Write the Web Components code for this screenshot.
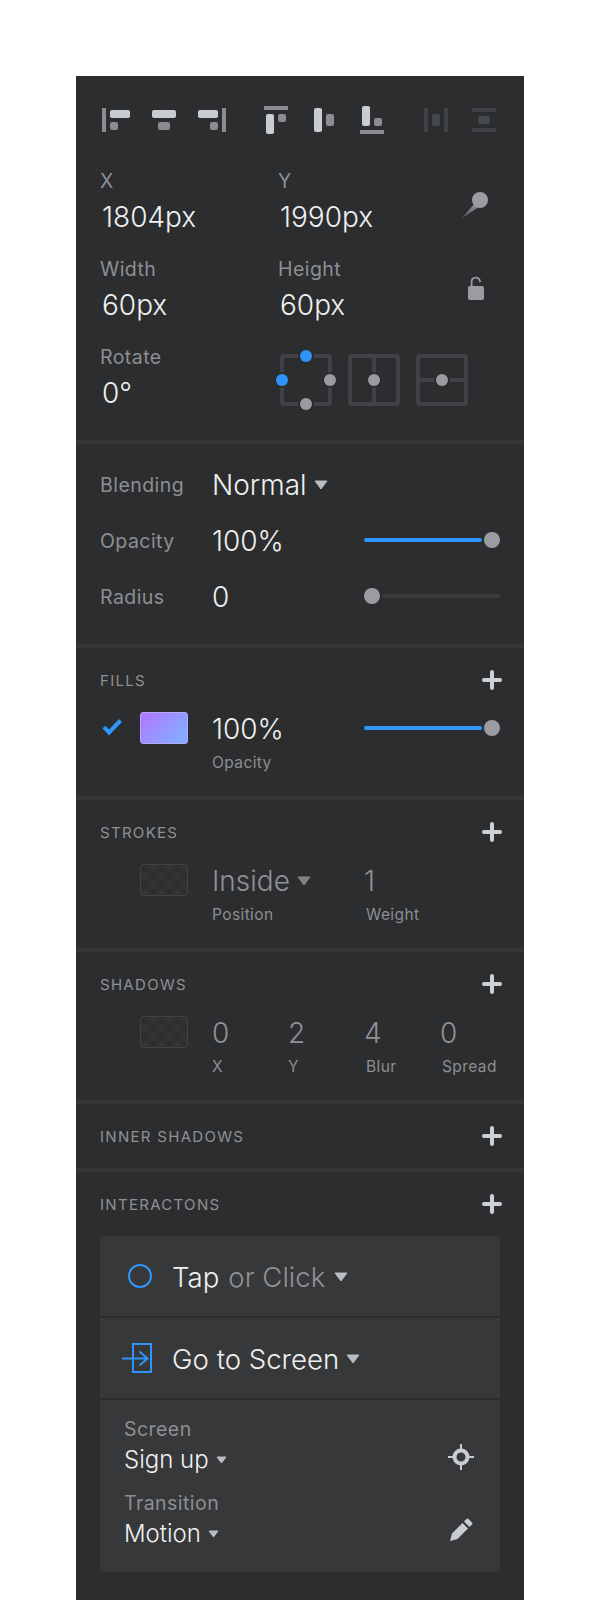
<!DOCTYPE html>
<html>
<head>
<meta charset="utf-8">
<title>Inspector</title>
<style>
html, body { margin: 0; padding: 0; background: #fff; }
body { height: 1600px; overflow: hidden; font-family: "Inter", "Liberation Sans", sans-serif; }
</style>
</head>
<body>
<inspector-panel>
  <panel-section>
    <align-bar></align-bar>
    <geometry-grid>
      <value-field label="X">1804px</value-field>
      <value-field label="Y">1990px</value-field>
      <svg-icon name="pin"></svg-icon>
      <value-field label="Width">60px</value-field>
      <value-field label="Height">60px</value-field>
      <svg-icon name="lock"></svg-icon>
      <value-field label="Rotate">0°</value-field>
      <anchor-group></anchor-group>
    </geometry-grid>
  </panel-section>

  <panel-section>
    <prop-row label="Blending"><drop-value>Normal</drop-value></prop-row>
    <prop-row label="Opacity">100%<range-slider slot="end" value="full"></range-slider></prop-row>
    <prop-row label="Radius">0<range-slider slot="end" value="empty"></range-slider></prop-row>
  </panel-section>

  <panel-section heading="Fills">
    <paint-row cols="152px 136px">
      <svg-icon slot="check" name="check"></svg-icon>
      <paint-swatch slot="swatch" kind="gradient"></paint-swatch>
      <value-stack label="Opacity">100%</value-stack>
      <range-slider value="full"></range-slider>
    </paint-row>
  </panel-section>

  <panel-section heading="Strokes">
    <paint-row cols="152px 76px" dim>
      <paint-swatch slot="swatch"></paint-swatch>
      <value-stack label="Position" dim><drop-value dim>Inside</drop-value></value-stack>
      <value-stack label="Weight" dim nudge>1</value-stack>
    </paint-row>
  </panel-section>

  <panel-section heading="Shadows">
    <paint-row cols="76px 76px 76px 76px" dim>
      <paint-swatch slot="swatch"></paint-swatch>
      <value-stack label="X" dim>0</value-stack>
      <value-stack label="Y" dim>2</value-stack>
      <value-stack label="Blur" dim nudge>4</value-stack>
      <value-stack label="Spread" dim nudge>0</value-stack>
    </paint-row>
  </panel-section>

  <panel-section heading="Inner Shadows"></panel-section>

  <panel-section heading="Interactons" last>
    <interaction-card>
      <action-row>
        <svg-icon slot="icon" name="circle"></svg-icon>
        <span>Tap</span><dim-text>or Click</dim-text><drop-value></drop-value>
      </action-row>
      <action-row>
        <svg-icon slot="icon" name="enter"></svg-icon>
        <drop-value>Go to Screen</drop-value>
      </action-row>
      <detail-block>
        <detail-row label="Screen" value="Sign up"><svg-icon name="target"></svg-icon></detail-row>
        <detail-row label="Transition" value="Motion"><svg-icon name="pencil"></svg-icon></detail-row>
      </detail-block>
    </interaction-card>
  </panel-section>
</inspector-panel>

<script>
const icons = {
  pin: `<svg width="32" height="36" viewBox="0 0 32 36"><defs><linearGradient id="t" x1="0" y1="1" x2="1" y2="0"><stop offset="0" stop-color="#55575a"/><stop offset="1" stop-color="#8f9195"/></linearGradient></defs><path d="M6 32 L18 18 L22 21.5 Z" fill="url(#t)"/><circle cx="24" cy="14" r="8" fill="#9a9ca1"/></svg>`,
  lock: `<svg width="28" height="28" viewBox="0 0 28 28"><path d="M15.6 12 V7.6 A4.2 4.2 0 0 1 23.8 6.6 L24.6 8" fill="none" stroke="#9a9ca1" stroke-width="1.8"/><rect x="12" y="12" width="16" height="14" rx="2" fill="#9a9ca1"/></svg>`,
  check: `<svg width="24" height="20" viewBox="0 0 24 20"><path d="M4 9 L9 14.5 L20.5 2.5" fill="none" stroke="#2e96fb" stroke-width="4"/></svg>`,
  circle: `<svg width="32" height="32" viewBox="0 0 32 32"><circle cx="20" cy="16" r="11" fill="none" stroke="#2e96fb" stroke-width="2"/></svg>`,
  enter: `<svg width="32" height="32" viewBox="0 0 32 32"><rect x="13" y="2" width="18" height="28" fill="none" stroke="#2e96fb" stroke-width="2"/><path d="M2 16.5 H27 M19.5 9.5 L27.5 16.5 L19.5 23.5" fill="none" stroke="#2e96fb" stroke-width="2"/></svg>`,
  target: `<svg width="28" height="28" viewBox="0 0 28 28"><circle cx="14" cy="14" r="6.5" fill="none" stroke="#c9ccd0" stroke-width="4"/><path d="M14 1 V6 M14 22 V27 M1 14 H6 M22 14 H27" stroke="#c9ccd0" stroke-width="2"/></svg>`,
  pencil: `<svg width="28" height="28" viewBox="0 0 28 28"><path d="M3 24 L5 16.5 L15.5 6 L21 11.5 L10.5 22 Z" fill="#c9ccd0"/><path d="M17 4.5 L19.5 2 Q20.5 1 21.5 2 L25 5.5 Q26 6.5 25 7.5 L22.5 10 Z" fill="#c9ccd0"/></svg>`
}

class SvgIcon extends HTMLElement {
  constructor() {
    super()
    this.attachShadow({ mode: 'open' })
  }
  connectedCallback() {
    this.shadowRoot.innerHTML = `<style>
      :host { display: inline-flex; }
      svg { display: block; }
    </style>${icons[this.getAttribute('name')]}`
  }
}

const panelTemplate = document.createElement('template')
panelTemplate.innerHTML = `<style>
  :host {
    display: block;
    box-sizing: border-box;
    width: 448px;
    height: 1524px;
    margin: 76px 0 0 76px;
    background: #2c2d2f;
    overflow: hidden;
    color: #eef0f2;
    font-family: "Inter", "Liberation Sans", sans-serif;
  }
</style><slot></slot>`

class InspectorPanel extends HTMLElement {
  constructor() {
    super()
    this.attachShadow({ mode: 'open' })
    this.shadowRoot.appendChild(panelTemplate.content.cloneNode(true))
  }
}

class PanelSection extends HTMLElement {
  constructor() {
    super()
    this.attachShadow({ mode: 'open' })
  }
  connectedCallback() {
    const heading = this.getAttribute('heading')
    this.shadowRoot.innerHTML = `<style>
      :host {
        display: block;
        padding: ${heading ? '20px' : '0'} 24px 0;
        border-bottom: 4px solid #353638;
      }
      :host([last]) { border-bottom: 0; }
      header {
        display: flex;
        justify-content: space-between;
        align-items: center;
        height: 24px;
        margin-bottom: 20px;
        font-size: 15px;
        letter-spacing: 1.3px;
        text-transform: uppercase;
        color: #8f9195;
      }
      svg { display: block; margin-right: -2px; }
    </style>
    ${heading ? `<header><span>${heading}</span><svg width="20" height="20" viewBox="0 0 20 20"><path d="M10 2 V18 M2 10 H18" stroke="#cdd0d4" stroke-width="4" stroke-linecap="round"/></svg></header>` : ''}
    <slot></slot>`
  }
}

const alignTemplate = document.createElement('template')
alignTemplate.innerHTML = `<style>
  :host { display: flex; height: 28px; padding: 30px 0 35px 2px; --l: #c9ccd0; --g: #8a8c90; --b: #404245; --m: #46494c; }
  svg { display: block; flex: none; }
  .light { fill: var(--l); }
  .gray { fill: var(--g); }
  .off { fill: var(--b); }
  .mid { fill: var(--m); }
</style>
<svg width="28" height="28"><rect class="gray" x="0" y="2" width="4" height="24"/><rect class="light" x="8" y="4" width="20" height="8" rx="2"/><rect class="gray" x="8" y="16" width="8" height="8" rx="2"/></svg>
<svg width="24" height="28" style="margin-left:22px"><rect class="light" x="0" y="4" width="24" height="8" rx="2"/><rect class="gray" x="6" y="16" width="12" height="8" rx="2"/></svg>
<svg width="28" height="28" style="margin-left:22px"><rect class="light" x="0" y="4" width="20" height="8" rx="2"/><rect class="gray" x="12" y="16" width="8" height="8" rx="2"/><rect class="gray" x="24" y="2" width="4" height="24"/></svg>
<svg width="24" height="28" style="margin-left:38px"><rect class="gray" x="0" y="0" width="24" height="4"/><rect class="light" x="2" y="8" width="8" height="20" rx="2"/><rect class="gray" x="14" y="8" width="8" height="8" rx="2"/></svg>
<svg width="20" height="28" style="margin-left:26px"><rect class="light" x="0" y="2" width="8" height="24" rx="2"/><rect class="gray" x="12" y="8" width="8" height="12" rx="2"/></svg>
<svg width="24" height="28" style="margin-left:26px"><rect class="light" x="2" y="0" width="8" height="20" rx="2"/><rect class="gray" x="14" y="12" width="8" height="8" rx="2"/><rect class="gray" x="0" y="24" width="24" height="4"/></svg>
<svg width="24" height="28" style="margin-left:40px"><rect class="off" x="0" y="2" width="4" height="24"/><rect class="off" x="20" y="2" width="4" height="24"/><rect class="mid" x="8" y="8" width="8" height="12" rx="2"/></svg>
<svg width="24" height="28" style="margin-left:24px"><rect class="off" x="0" y="2" width="24" height="4"/><rect class="off" x="0" y="22" width="24" height="4"/><rect class="mid" x="6" y="10" width="12" height="8" rx="2"/></svg>`

class AlignBar extends HTMLElement {
  constructor() {
    super()
    this.attachShadow({ mode: 'open' })
    this.shadowRoot.appendChild(alignTemplate.content.cloneNode(true))
  }
}

const geoTemplate = document.createElement('template')
geoTemplate.innerHTML = `<style>
  :host {
    display: grid;
    grid-template-columns: 178px 178px 1fr;
    row-gap: 22px;
    padding-bottom: 29px;
  }
  ::slotted(svg-icon) { margin-top: 17px; height: 28px; }
</style><slot></slot>`

class GeometryGrid extends HTMLElement {
  constructor() {
    super()
    this.attachShadow({ mode: 'open' })
    this.shadowRoot.appendChild(geoTemplate.content.cloneNode(true))
  }
}

class ValueField extends HTMLElement {
  constructor() {
    super()
    this.attachShadow({ mode: 'open' })
  }
  connectedCallback() {
    this.shadowRoot.innerHTML = `<style>
      :host { display: block; }
      .label { height: 24px; line-height: 24px; font-size: 19.5px; color: #8d8f93; letter-spacing: .45px; }
      .value { height: 36px; line-height: 36px; margin-top: 6px; padding-left: 2px; font-size: 28px; font-weight: 300; }
    </style><div class="label">${this.getAttribute('label')}</div><div class="value"><slot></slot></div>`
  }
}

const anchorTemplate = document.createElement('template')
anchorTemplate.innerHTML = `<style>
  :host { display: flex; margin: 5px 0 0 -2px; grid-column: span 2; }
  svg { display: block; flex: none; }
  rect, path { fill: none; stroke: #404245; stroke-width: 4; }
  .dot { fill: #9a9ca1; }
  .on { fill: #2e96fb; }
  .halo { fill: #2c2d2f; }
</style>
<svg width="60" height="60">
  <rect x="6" y="6" width="48" height="48" rx="2"/>
  <circle class="halo" cx="30" cy="6" r="8"/><circle class="halo" cx="6" cy="30" r="8"/><circle class="halo" cx="54" cy="30" r="8"/><circle class="halo" cx="30" cy="54" r="8"/>
  <circle class="on" cx="30" cy="6" r="6"/><circle class="on" cx="6" cy="30" r="6"/><circle class="dot" cx="54" cy="30" r="6"/><circle class="dot" cx="30" cy="54" r="6"/>
</svg>
<svg width="52" height="60" style="margin-left:12px">
  <rect x="2" y="6" width="48" height="48" rx="2"/><path d="M26 6 V54"/>
  <circle class="halo" cx="26" cy="30" r="8"/><circle class="dot" cx="26" cy="30" r="6"/>
</svg>
<svg width="52" height="60" style="margin-left:16px">
  <rect x="2" y="6" width="48" height="48" rx="2"/><path d="M2 30 H50"/>
  <circle class="halo" cx="26" cy="30" r="8"/><circle class="dot" cx="26" cy="30" r="6"/>
</svg>`

class AnchorGroup extends HTMLElement {
  constructor() {
    super()
    this.attachShadow({ mode: 'open' })
    this.shadowRoot.appendChild(anchorTemplate.content.cloneNode(true))
  }
}

class PropRow extends HTMLElement {
  constructor() {
    super()
    this.attachShadow({ mode: 'open' })
  }
  connectedCallback() {
    this.shadowRoot.innerHTML = `<style>
      :host {
        display: grid;
        grid-template-columns: 112px 152px 136px;
        align-items: center;
        height: 36px;
        margin-top: 20px;
      }
      :host(:first-child) { margin-top: 22px; }
      :host(:last-child) { margin-bottom: 30px; }
      .label { padding-top: 2px; font-size: 19.5px; color: #8d8f93; letter-spacing: .45px; }
      .value { padding-top: 2px; font-size: 28px; font-weight: 300; display: flex; align-items: center; }
    </style><div class="label">${this.getAttribute('label')}</div><div class="value"><slot></slot></div><slot name="end"></slot>`
  }
}

const sliderTemplate = document.createElement('template')
sliderTemplate.innerHTML = `<style>
  :host { display: flex; align-items: center; gap: 2px; height: 16px; width: 136px; }
  .knob { flex: none; width: 16px; height: 16px; border-radius: 50%; background: #9a9ca1; }
  .track { flex: 1; height: 4px; border-radius: 2px; }
  :host([value="full"]) .track { background: #2e96fb; }
  :host([value="empty"]) .track { background: #3b3c3e; }
  :host([value="empty"]) { flex-direction: row-reverse; }
</style><div class="track"></div><div class="knob"></div>`

class RangeSlider extends HTMLElement {
  constructor() {
    super()
    this.attachShadow({ mode: 'open' })
    this.shadowRoot.appendChild(sliderTemplate.content.cloneNode(true))
  }
}

class DropValue extends HTMLElement {
  constructor() {
    super()
    this.attachShadow({ mode: 'open' })
  }
  connectedCallback() {
    this.shadowRoot.innerHTML = `<style>
      :host { display: inline-flex; align-items: center; gap: 7px; --caret: #b9bcc0; }
      :host([dim]) { --caret: #808286; color: #8f9195; }
      :host([small]) { gap: 7px; }
      svg { display: block; flex: none; }
    </style><slot></slot>${this.hasAttribute('small')
      ? `<svg width="11" height="8" viewBox="0 0 11 8"><path d="M1 1 H10 L5.5 7 Z" fill="var(--caret)" stroke="var(--caret)" stroke-linejoin="round"/></svg>`
      : `<svg width="14" height="10" viewBox="0 0 14 10"><path d="M1 1 H13 L7 9 Z" fill="var(--caret)" stroke="var(--caret)" stroke-linejoin="round"/></svg>`}`
  }
}

class ValueStack extends HTMLElement {
  constructor() {
    super()
    this.attachShadow({ mode: 'open' })
  }
  connectedCallback() {
    this.shadowRoot.innerHTML = `<style>
      :host { display: block; }
      .value { display: flex; align-items: center; box-sizing: border-box; height: 32px; padding-top: 2px; font-size: 28px; font-weight: 300; }
      :host([dim]) .value { color: #8f9195; }
      .label { height: 20px; line-height: 22px; margin-top: 8px; font-size: 15.5px; letter-spacing: .4px; color: #8d8f93; }
      :host([nudge]) .label { padding-left: 2px; }
    </style><div class="value"><slot></slot></div><div class="label">${this.getAttribute('label')}</div>`
  }
}

class PaintRow extends HTMLElement {
  constructor() {
    super()
    this.attachShadow({ mode: 'open' })
  }
  connectedCallback() {
    this.shadowRoot.innerHTML = `<style>
      :host {
        display: grid;
        grid-template-columns: 40px 72px ${this.getAttribute('cols')};
        padding-bottom: 24px;
      }
      ::slotted(svg-icon) { margin-top: 6px; }
      ::slotted(range-slider) { margin-top: 8px; }
    </style><div><slot name="check"></slot></div><div><slot name="swatch"></slot></div><slot></slot>`
  }
}

class PaintSwatch extends HTMLElement {
  constructor() {
    super()
    this.attachShadow({ mode: 'open' })
  }
  connectedCallback() {
    const gradient = this.getAttribute('kind') === 'gradient'
    this.shadowRoot.innerHTML = `<style>
      :host {
        display: block;
        box-sizing: border-box;
        width: 48px;
        height: 32px;
        border-radius: 3px;
        border: 1px solid ${gradient ? '#b5a8fb' : '#414245'};
        background: ${gradient
          ? 'linear-gradient(135deg, #ad7afe 10%, #85abff 85%)'
          : 'repeating-conic-gradient(#323335 0 25%, #2d2e30 0 50%) 0 0 / 16px 16px'};
      }
    </style>`
  }
}

const cardTemplate = document.createElement('template')
cardTemplate.innerHTML = `<style>
  :host {
    display: flex;
    flex-direction: column;
    gap: 2px;
    border-radius: 3px;
    overflow: hidden;
  }
</style><slot></slot>`

class InteractionCard extends HTMLElement {
  constructor() {
    super()
    this.attachShadow({ mode: 'open' })
    this.shadowRoot.appendChild(cardTemplate.content.cloneNode(true))
  }
}

const actionTemplate = document.createElement('template')
actionTemplate.innerHTML = `<style>
  :host {
    display: flex;
    align-items: center;
    height: 80px;
    padding-left: 20px;
    background: #37383a;
    font-size: 27.6px;
    font-weight: 300;
  }
  .text { display: flex; align-items: center; gap: 9px; margin-left: 20px; padding-top: 2px; }
  svg-icon { flex: none; }
</style><slot name="icon"></slot><div class="text"><slot></slot></div>`

class ActionRow extends HTMLElement {
  constructor() {
    super()
    this.attachShadow({ mode: 'open' })
    this.shadowRoot.appendChild(actionTemplate.content.cloneNode(true))
  }
}

class DimText extends HTMLElement {
  constructor() {
    super()
    this.attachShadow({ mode: 'open' })
    this.shadowRoot.innerHTML = `<style>:host { color: #8f9195; }</style><slot></slot>`
  }
}

const blockTemplate = document.createElement('template')
blockTemplate.innerHTML = `<style>
  :host {
    display: flex;
    flex-direction: column;
    gap: 16px;
    padding: 18px 25px 22px 24px;
    background: #37383a;
  }
</style><slot></slot>`

class DetailBlock extends HTMLElement {
  constructor() {
    super()
    this.attachShadow({ mode: 'open' })
    this.shadowRoot.appendChild(blockTemplate.content.cloneNode(true))
  }
}

class DetailRow extends HTMLElement {
  constructor() {
    super()
    this.attachShadow({ mode: 'open' })
  }
  connectedCallback() {
    this.shadowRoot.innerHTML = `<style>
      :host { display: flex; justify-content: space-between; align-items: flex-end; }
      .label { height: 22px; line-height: 22px; font-size: 19.5px; letter-spacing: .45px; color: #8d8f93; }
      .value { height: 32px; line-height: 32px; margin-top: 4px; font-size: 24px; font-weight: 300; }
      ::slotted(svg-icon) { margin-bottom: 5px; }
    </style><div><div class="label">${this.getAttribute('label')}</div><div class="value"><drop-value small>${this.getAttribute('value')}</drop-value></div></div><slot></slot>`
  }
}

window.customElements.define('svg-icon', SvgIcon)
window.customElements.define('inspector-panel', InspectorPanel)
window.customElements.define('panel-section', PanelSection)
window.customElements.define('align-bar', AlignBar)
window.customElements.define('geometry-grid', GeometryGrid)
window.customElements.define('value-field', ValueField)
window.customElements.define('anchor-group', AnchorGroup)
window.customElements.define('prop-row', PropRow)
window.customElements.define('range-slider', RangeSlider)
window.customElements.define('drop-value', DropValue)
window.customElements.define('value-stack', ValueStack)
window.customElements.define('paint-row', PaintRow)
window.customElements.define('paint-swatch', PaintSwatch)
window.customElements.define('interaction-card', InteractionCard)
window.customElements.define('action-row', ActionRow)
window.customElements.define('dim-text', DimText)
window.customElements.define('detail-block', DetailBlock)
window.customElements.define('detail-row', DetailRow)
</script>
</body>
</html>
